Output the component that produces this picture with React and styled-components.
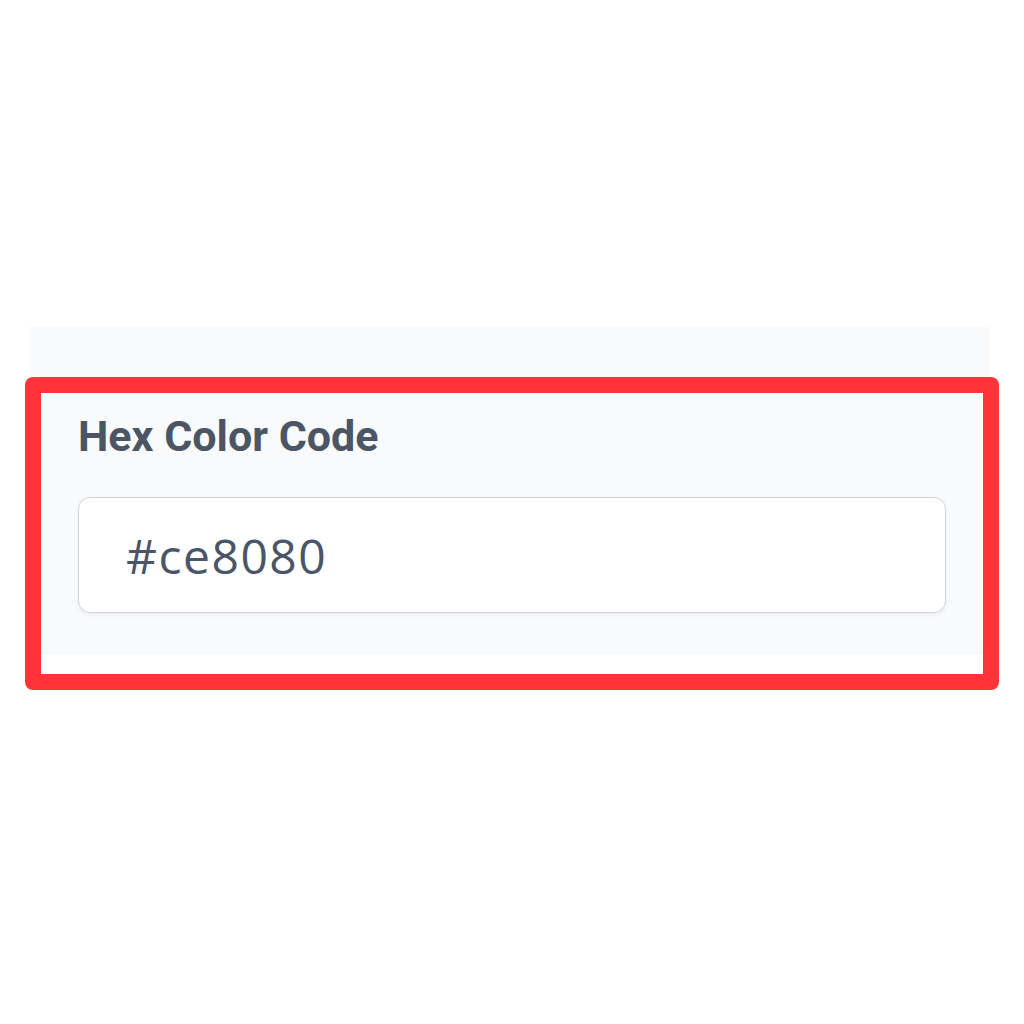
import styled, { createGlobalStyle } from 'styled-components';

const GlobalStyle = createGlobalStyle`
    body {
        margin: 0;
        background: #ffffff;
        font-family: Roboto, "Liberation Sans", sans-serif;
    }
`

const Page = styled.div`
    padding-top: 327px;
    height: 1024px;
    box-sizing: border-box;
`

const Panel = styled.section`
    position: relative;
    margin: 0 34px 0 30px;
    padding: 84px 44px 42px 48px;
    background: #f9fafb;
    display: flex;
    flex-direction: column;
    gap: 36px;
`

const Highlight = styled.div`
    position: absolute;
    top: 50px;
    left: -5px;
    right: -9px;
    bottom: -35px;
    border: 16px solid #ff3338;
    border-radius: 8px;
    pointer-events: none;
`

const Label = styled.label`
    font-family: Roboto, "Liberation Sans", sans-serif;
    font-weight: 700;
    font-size: 43px;
    line-height: 50px;
    color: #4b5563;
`

const Input = styled.input`
    box-sizing: border-box;
    width: 100%;
    height: 116px;
    padding: 0 47px;
    border: 1.5px solid #cfd4dc;
    border-radius: 12px;
    background: #ffffff;
    box-shadow: 0 2px 5px rgba(0, 0, 0, 0.05);
    font-family: "Open Sans", "Noto Sans", sans-serif;
    font-size: 48px;
    letter-spacing: 1.5px;
    color: #4a5568;
    outline: none;
`

const App = () => {
    return (
        <Page>
            <GlobalStyle />
            <Panel>
                <Label htmlFor="hex">Hex Color Code</Label>
                <Input id="hex" defaultValue="#ce8080" readOnly />
                <Highlight />
            </Panel>
        </Page>
    )
}

export default App
